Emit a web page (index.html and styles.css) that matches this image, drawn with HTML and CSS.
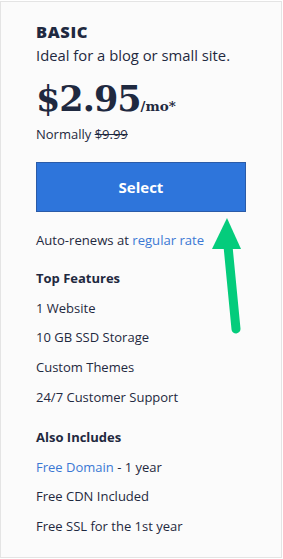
FILE: index.html
```html
<!DOCTYPE html>
<html>
<head>
<meta charset="utf-8">
<link rel="stylesheet" href="styles.css">
</head>
<body>
<div class="card">
  <h2 class="plan">BASIC</h2>
  <p class="tagline">Ideal for a blog or small site.</p>
  <div class="price"><span class="amount">$2.95</span><span class="per">/mo*</span></div>
  <p class="normally">Normally <s>$9.99</s></p>
  <button class="select">Select</button>
  <p class="renew">Auto-renews at <a href="#">regular rate</a></p>
  <div class="section">
    <h3 class="section-title">Top Features</h3>
    <ul class="list">
      <li>1 Website</li>
      <li>10 GB SSD Storage</li>
      <li>Custom Themes</li>
      <li>24/7 Customer Support</li>
    </ul>
  </div>
  <div class="section also">
    <h3 class="section-title">Also Includes</h3>
    <ul class="list">
      <li><a href="#">Free Domain</a> - 1 year</li>
      <li>Free CDN Included</li>
      <li>Free SSL for the 1st year</li>
    </ul>
  </div>
  <svg class="arrow" width="40" height="120" viewBox="0 0 40 120">
    <polygon points="17,0 2,31 31,31" fill="#04cc7c"/>
    <line x1="18" y1="28" x2="26" y2="111" stroke="#04cc7c" stroke-width="9" stroke-linecap="round"/>
  </svg>
</div>
</body>
</html>
```
FILE: styles.css
```css
html, body {
  margin: 0;
  padding: 0;
  background: #ffffff;
}
body {
  font-family: "Open Sans", sans-serif;
  color: #1f2940;
}
.card {
  position: relative;
  margin-top: 1px;
  width: 282px;
  height: 557px;
  box-sizing: border-box;
  border: 1px solid #e4e4e4;
  background: #fbfbfb;
  padding: 20px 30px 0 35px;
}
.plan {
  margin: 0;
  font-size: 16.5px;
  line-height: 20px;
  font-weight: 800;
  letter-spacing: 0.6px;
}
.tagline {
  margin: 3px 0 0;
  font-size: 14.8px;
  line-height: 20px;
}
.price {
  margin-top: 12px;
  font-family: "DejaVu Serif", serif;
  font-weight: 700;
  line-height: 44px;
  height: 44px;
}
.amount {
  font-size: 35px;
  letter-spacing: -1px;
}
.per {
  font-size: 13.5px;
}
.normally {
  margin: 4px 0 0;
  font-size: 13px;
  line-height: 18px;
}
.normally s {
  text-decoration-thickness: 1px;
}
.select {
  display: block;
  margin-top: 19px;
  width: 210px;
  height: 50px;
  box-sizing: border-box;
  border: 1px solid #2a5ba8;
  border-radius: 0;
  background: #2e75db;
  color: #ffffff;
  font-family: inherit;
  font-size: 15px;
  font-weight: 700;
}
.renew {
  margin: 18px 0 0;
  font-size: 13.1px;
  line-height: 20px;
}
a {
  color: #3a78d4;
  text-decoration: none;
}
.section {
  margin-top: 14px;
}
.section.also {
  margin-top: 10.5px;
}
.section-title {
  margin: 0;
  font-size: 13px;
  font-weight: 700;
  line-height: 29.7px;
}
.list {
  list-style: none;
  margin: 0;
  padding: 0;
  font-size: 13px;
  line-height: 29.7px;
}
.arrow {
  position: absolute;
  left: 209px;
  top: 216px;
}
```
